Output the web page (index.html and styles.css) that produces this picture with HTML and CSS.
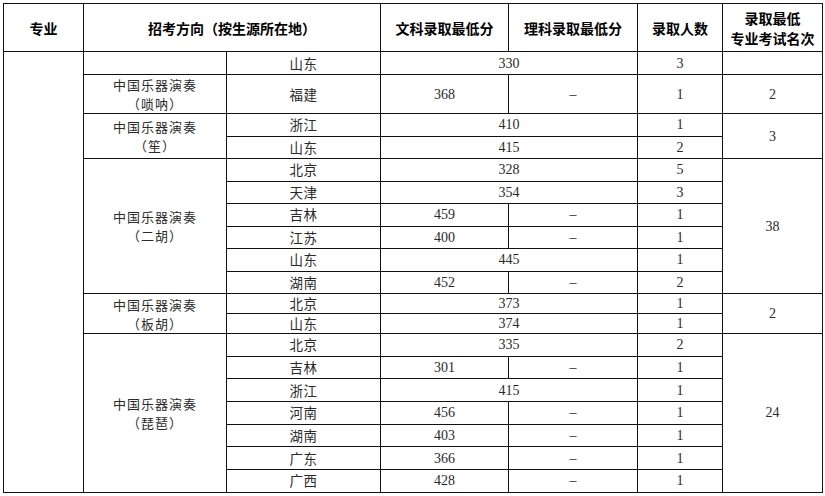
FILE: index.html
```html
<!DOCTYPE html>
<html lang="zh-CN">
<head>
<meta charset="utf-8">
<title>录取分数</title>
<link rel="stylesheet" href="styles.css">
</head>
<body>
<table class="score-table">
  <colgroup>
    <col class="c-major">
    <col class="c-dir">
    <col class="c-prov">
    <col class="c-wen">
    <col class="c-li">
    <col class="c-num">
    <col class="c-rank">
  </colgroup>
  <thead>
    <tr class="r-head">
      <th>专业</th>
      <th colspan="2">招考方向（按生源所在地）</th>
      <th>文科录取最低分</th>
      <th>理科录取最低分</th>
      <th>录取人数</th>
      <th><span class="hl">录取最低</span><span class="hl">专业考试名次</span></th>
    </tr>
  </thead>
  <tbody>
    <tr class="r-a">
      <td rowspan="20"></td>
      <td></td>
      <td>山东</td>
      <td colspan="2" class="num">330</td>
      <td class="num">3</td>
      <td></td>
    </tr>
    <tr class="r-tall">
      <td class="grp"><span class="gl">中国乐器演奏</span><span class="gl">（唢呐）</span></td>
      <td>福建</td>
      <td class="num">368</td>
      <td class="num">–</td>
      <td class="num">1</td>
      <td class="num">2</td>
    </tr>
    <tr class="r-b">
      <td rowspan="2" class="grp"><span class="gl">中国乐器演奏</span><span class="gl">（笙）</span></td>
      <td>浙江</td>
      <td colspan="2" class="num">410</td>
      <td class="num">1</td>
      <td rowspan="2" class="num">3</td>
    </tr>
    <tr class="r-b">
      <td>山东</td>
      <td colspan="2" class="num">415</td>
      <td class="num">2</td>
    </tr>
    <tr class="r-b">
      <td rowspan="6" class="grp"><span class="gl">中国乐器演奏</span><span class="gl">（二胡）</span></td>
      <td>北京</td>
      <td colspan="2" class="num">328</td>
      <td class="num">5</td>
      <td rowspan="6" class="num">38</td>
    </tr>
    <tr class="r-b">
      <td>天津</td>
      <td colspan="2" class="num">354</td>
      <td class="num">3</td>
    </tr>
    <tr class="r-b">
      <td>吉林</td>
      <td class="num">459</td>
      <td class="num">–</td>
      <td class="num">1</td>
    </tr>
    <tr class="r-b">
      <td>江苏</td>
      <td class="num">400</td>
      <td class="num">–</td>
      <td class="num">1</td>
    </tr>
    <tr class="r-b">
      <td>山东</td>
      <td colspan="2" class="num">445</td>
      <td class="num">1</td>
    </tr>
    <tr class="r-b">
      <td>湖南</td>
      <td class="num">452</td>
      <td class="num">–</td>
      <td class="num">2</td>
    </tr>
    <tr class="r-s">
      <td rowspan="2" class="grp"><span class="gl">中国乐器演奏</span><span class="gl">（板胡）</span></td>
      <td>北京</td>
      <td colspan="2" class="num">373</td>
      <td class="num">1</td>
      <td rowspan="2" class="num">2</td>
    </tr>
    <tr class="r-s">
      <td>山东</td>
      <td colspan="2" class="num">374</td>
      <td class="num">1</td>
    </tr>
    <tr class="r-c">
      <td rowspan="7" class="grp"><span class="gl">中国乐器演奏</span><span class="gl">（琵琶）</span></td>
      <td>北京</td>
      <td colspan="2" class="num">335</td>
      <td class="num">2</td>
      <td rowspan="7" class="num">24</td>
    </tr>
    <tr class="r-c">
      <td>吉林</td>
      <td class="num">301</td>
      <td class="num">–</td>
      <td class="num">1</td>
    </tr>
    <tr class="r-c">
      <td>浙江</td>
      <td colspan="2" class="num">415</td>
      <td class="num">1</td>
    </tr>
    <tr class="r-c">
      <td>河南</td>
      <td class="num">456</td>
      <td class="num">–</td>
      <td class="num">1</td>
    </tr>
    <tr class="r-c">
      <td>湖南</td>
      <td class="num">403</td>
      <td class="num">–</td>
      <td class="num">1</td>
    </tr>
    <tr class="r-c">
      <td>广东</td>
      <td class="num">366</td>
      <td class="num">–</td>
      <td class="num">1</td>
    </tr>
    <tr class="r-c">
      <td>广西</td>
      <td class="num">428</td>
      <td class="num">–</td>
      <td class="num">1</td>
    </tr>
  </tbody>
</table>
</body>
</html>
```

FILE: styles.css
```css
html, body {
  margin: 0;
  padding: 0;
  background: #fff;
}

body {
  padding: 3px 0 0 3px;
}

.score-table {
  border-collapse: collapse;
  table-layout: fixed;
  width: 820px;
  font-family: "Liberation Serif", "Noto Sans CJK SC", serif;
  font-size: 14px;
  color: #2a2a2a;
}

.c-major { width: 80px; }
.c-dir   { width: 143px; }
.c-prov  { width: 154px; }
.c-wen   { width: 128px; }
.c-li    { width: 129px; }
.c-num   { width: 85px; }
.c-rank  { width: 100px; }

.score-table th,
.score-table td {
  border: 1px solid #111;
  padding: 0;
  text-align: center;
  vertical-align: middle;
  line-height: 17px;
}

.score-table th {
  font-family: "Noto Sans CJK SC", sans-serif;
  font-weight: bold;
  font-size: 14px;
  color: #000;
  line-height: 20px;
}

.hl {
  display: block;
  line-height: 20px;
}

.score-table td {
  font-family: "Noto Sans CJK SC", sans-serif;
  font-size: 13.5px;
  letter-spacing: 0.5px;
}

.score-table td.num {
  font-family: "Liberation Serif", serif;
  font-size: 14px;
  letter-spacing: 0;
}

.score-table td.grp {
  font-size: 13px;
  letter-spacing: 1px;
}

.gl {
  display: block;
  line-height: 19px;
}

.r-head { height: 48px; }
.r-a    { height: 23px; }
.r-tall { height: 38px; }
.r-b    { height: 22.5px; }
.r-s    { height: 20px; }
.r-c    { height: 22.7px; }
```
